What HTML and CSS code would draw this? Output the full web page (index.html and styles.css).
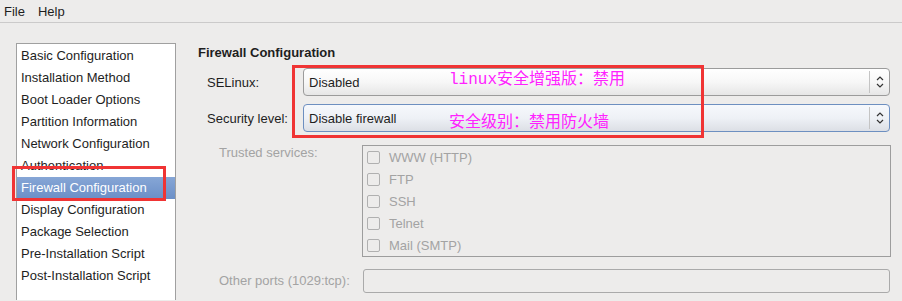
FILE: index.html
```html
<!DOCTYPE html>
<html lang="en">
<head>
    <meta charset="UTF-8">
    <title>Kickstart Configurator</title>
    <link rel="stylesheet" href="styles.css">
</head>
<body>
    <div class="menubar">
        <span class="menu-item">File</span>
        <span class="menu-item">Help</span>
    </div>

    <div class="main">
        <ul class="sidebar">
            <li>Basic Configuration</li>
            <li>Installation Method</li>
            <li>Boot Loader Options</li>
            <li>Partition Information</li>
            <li>Network Configuration</li>
            <li>Authentication</li>
            <li class="selected">Firewall Configuration</li>
            <li>Display Configuration</li>
            <li>Package Selection</li>
            <li>Pre-Installation Script</li>
            <li>Post-Installation Script</li>
        </ul>

        <div class="panel">
            <h1>Firewall Configuration</h1>

            <div class="field">
                <label>SELinux:</label>
                <div class="combo">
                    <span class="combo-text">Disabled</span>
                    <span class="combo-arrow">
                        <svg width="8" height="14" viewBox="0 0 8 14"><path d="M1 5 L4 2 L7 5 M1 9 L4 12 L7 9" fill="none" stroke="#333" stroke-width="1.2"/></svg>
                    </span>
                </div>
            </div>

            <div class="field">
                <label>Security level:</label>
                <div class="combo focused">
                    <span class="combo-text">Disable firewall</span>
                    <span class="combo-arrow">
                        <svg width="8" height="14" viewBox="0 0 8 14"><path d="M1 5 L4 2 L7 5 M1 9 L4 12 L7 9" fill="none" stroke="#333" stroke-width="1.2"/></svg>
                    </span>
                </div>
            </div>

            <div class="services">
                <label>Trusted services:</label>
                <div class="service-box">
                    <div class="check"><span class="box"></span>WWW (HTTP)</div>
                    <div class="check"><span class="box"></span>FTP</div>
                    <div class="check"><span class="box"></span>SSH</div>
                    <div class="check"><span class="box"></span>Telnet</div>
                    <div class="check"><span class="box"></span>Mail (SMTP)</div>
                </div>
            </div>

            <div class="ports">
                <label>Other ports (1029:tcp):</label>
                <div class="entry"></div>
            </div>
        </div>
    </div>

    <!-- annotations drawn over the screenshot -->
    <div class="mark mark-list"></div>
    <div class="mark mark-combo"></div>
    <div class="note note-selinux">linux安全增强版：禁用</div>
    <div class="note note-level">安全级别：禁用防火墙</div>
</body>
</html>
```

FILE: styles.css
```css
:root {
    --bg: #edeceb;
    --text: #2e3436;
    --muted: #a3a3a3;
    --border: #a0a0a0;
    --mark: #f03434;
    --note: #ff22ff;
}

body {
    margin: 0;
    background-color: var(--bg);
    font-family: "Liberation Sans", Arial, sans-serif;
    font-size: 13px;
    color: var(--text);
    height: 301px;
    overflow: hidden;
    position: relative;
}

.menubar {
    height: 22px;
    border-bottom: 1px solid #cbcaca;
    display: flex;
    align-items: center;
}

.menu-item {
    padding: 0 8px 0 4px;
    margin-right: 1px;
    color: #1e1e1e;
}

.main {
    display: flex;
    padding-top: 20px;
}

.sidebar {
    list-style: none;
    margin: 0 0 0 16px;
    padding: 1px 0 0 0;
    width: 158px;
    height: 255px;
    overflow: hidden;
    background: #fff;
    border: 1px solid var(--border);
    border-bottom: none;
}

.sidebar li {
    height: 22px;
    line-height: 22px;
    padding-left: 4px;
    color: #1e1e1e;
    white-space: nowrap;
}

.sidebar li.selected {
    background: linear-gradient(#86a6d6, #6b8fc7);
    color: #fff;
}

.panel {
    flex: 1;
    margin-left: 22px;
    margin-right: 12px;
}

h1 {
    font-size: 13px;
    font-weight: bold;
    line-height: 16px;
    margin: 2px 0 7px 0;
    color: #1e1e1e;
}

.field {
    display: flex;
    align-items: center;
    padding-left: 9px;
    margin-bottom: 8px;
}

.field label {
    width: 96px;
    color: #1e1e1e;
}

.combo {
    flex: 1;
    height: 26px;
    border: 1px solid #9b9b9b;
    border-radius: 4px;
    background: linear-gradient(#ffffff 0%, #f7f7f7 50%, #e6e6e6 100%);
    display: flex;
    align-items: center;
}

.combo.focused {
    border-color: #6d8fc0;
    background: linear-gradient(#f6f8fc 0%, #eef1f6 50%, #dcdfe5 100%);
}

.combo-text {
    flex: 1;
    padding-left: 5px;
    color: #1e1e1e;
}

.combo-arrow {
    width: 19px;
    height: 22px;
    border-left: 1px solid #c4c4c4;
    display: flex;
    align-items: center;
    justify-content: center;
}

.services {
    display: flex;
    padding-left: 21px;
    margin-top: 13px;
}

.services label,
.ports label {
    width: 143px;
    color: var(--muted);
    line-height: 16px;
}

.service-box {
    flex: 1;
    border: 1px solid #9d9d9d;
    margin-right: -1px;
}

.check {
    height: 22px;
    display: flex;
    align-items: center;
    padding-left: 4px;
    color: var(--muted);
}

.check .box {
    width: 11px;
    height: 11px;
    border: 1px solid #b0b0b0;
    border-radius: 2px;
    margin-right: 9px;
}

.ports {
    display: flex;
    align-items: center;
    padding-left: 21px;
    margin-top: 12px;
}

.ports label {
    width: 144px;
}

.entry {
    flex: 1;
    height: 22px;
    border: 1px solid #aaaaaa;
    border-radius: 3px;
}

.mark {
    position: absolute;
    border: 3px solid var(--mark);
}

.mark-list {
    left: 12px;
    top: 166px;
    width: 148px;
    height: 29px;
}

.mark-combo {
    left: 292px;
    top: 65px;
    width: 406px;
    height: 67px;
}

.note {
    position: absolute;
    left: 449px;
    font-family: "Liberation Mono", "Noto Sans CJK SC", monospace;
    font-size: 16px;
    line-height: 18px;
    color: var(--note);
    white-space: nowrap;
}

.note-selinux {
    top: 71px;
}

.note-level {
    top: 114px;
}
```
